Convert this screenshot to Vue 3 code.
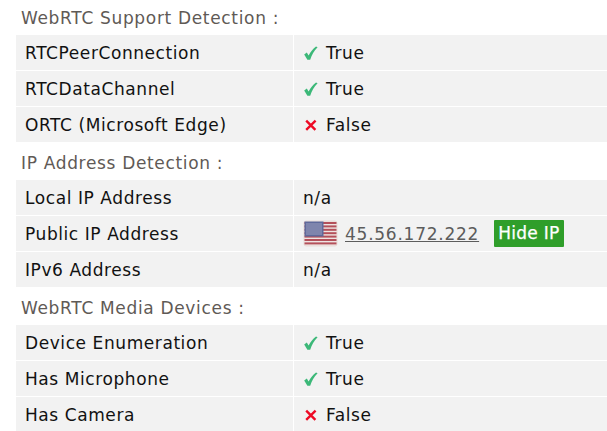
<script setup>
const sections = [
  { title: 'WebRTC Support Detection :', rows: [
    { label: 'RTCPeerConnection', status: true },
    { label: 'RTCDataChannel', status: true },
    { label: 'ORTC (Microsoft Edge)', status: false },
  ]},
  { title: 'IP Address Detection :', rows: [
    { label: 'Local IP Address', text: 'n/a' },
    { label: 'Public IP Address', ip: '45.56.172.222' },
    { label: 'IPv6 Address', text: 'n/a' },
  ]},
  { title: 'WebRTC Media Devices :', rows: [
    { label: 'Device Enumeration', status: true },
    { label: 'Has Microphone', status: true },
    { label: 'Has Camera', status: false },
  ]},
]
const stripes = [0, 1, 2, 3, 4, 5, 6]
</script>

<template>
  <div class="page">
    <section v-for="s in sections" :key="s.title" class="section">
      <h3 class="title">{{ s.title }}</h3>
      <div class="table">
        <div v-for="r in s.rows" :key="r.label" class="row">
          <div class="cell label">{{ r.label }}</div>
          <div class="cell value">
            <template v-if="r.status !== undefined">
              <svg v-if="r.status" class="mark" width="16" height="16" viewBox="0 0 16 16">
                <path d="M1.2 9.4 L3.8 7.4 L5.6 10.6 C7.4 7 9.6 4 13 1.4 L14.6 2.2 C11 5.8 8.8 9.8 7.2 14.8 L4.4 14.8 Z" fill="#3cb878" />
              </svg>
              <svg v-else class="mark" width="16" height="16" viewBox="0 0 16 16">
                <path d="M3.2 3.6 L12.4 12.8 M12.6 3.6 L3.2 12.8" stroke="#ee0a24" stroke-width="2.4" fill="none" />
              </svg>
              <span>{{ r.status ? 'True' : 'False' }}</span>
            </template>
            <template v-else-if="r.ip">
              <svg class="flag" width="35" height="27" viewBox="0 0 35 27">
                <rect x="0.5" y="0.5" width="34" height="26" rx="3" fill="#e9dcd8" />
                <rect x="1.5" y="1.5" width="32" height="24" rx="2" fill="#eee4e2" />
                <rect v-for="i in stripes" :key="i" x="1.5" :y="2 + i * 3.4" width="32" height="2" fill="#b4505a" />
                <rect x="1.5" y="1.5" width="19" height="15" fill="#5f6a9c" />
                <rect x="3" y="3" width="16" height="12" fill="#7f85ad" />
              </svg>
              <a class="ip" href="#">{{ r.ip }}</a>
              <span class="hide">Hide IP</span>
            </template>
            <span v-else>{{ r.text }}</span>
          </div>
        </div>
      </div>
    </section>
  </div>
</template>

<style scoped>
.page {
  width: 607px;
  height: 431px;
  overflow: hidden;
  background: #fff;
  font-family: "DejaVu Sans", Verdana, sans-serif;
  font-size: 17px;
  letter-spacing: 0.58px;
  color: #111;
  box-sizing: border-box;
}
.section {
  display: flex;
  flex-direction: column;
}
.section + .section {
  padding-top: 3px;
}
.title {
  margin: 0;
  height: 35px;
  line-height: 37px;
  padding-left: 21px;
  font-size: 17px;
  font-weight: 400;
  letter-spacing: 0.67px;
  color: #5f5a56;
}
.table {
  margin-left: 16px;
  display: flex;
  flex-direction: column;
  gap: 1px;
}
.row {
  display: grid;
  grid-template-columns: 277px 1fr;
  gap: 1px;
  height: 35px;
}
.cell {
  background: #f2f2f2;
  display: flex;
  align-items: center;
  box-sizing: border-box;
}
.label {
  padding-left: 9px;
}
.value {
  padding-left: 9px;
}
.mark {
  margin-right: 7px;
  flex: none;
}
.flag {
  flex: none;
  margin-right: 7px;
}
.ip {
  color: #5c5c5c;
  letter-spacing: 0.75px;
  text-decoration: underline;
}
.hide {
  margin-left: 15px;
  background: #2f9e2a;
  color: #fff;
  padding: 0 4px;
  height: 27px;
  line-height: 27px;
  border-radius: 1px;
  letter-spacing: 0.3px;
  -webkit-text-stroke: 0.25px #fff;
}
</style>

<style>
body { margin: 0; }
</style>
